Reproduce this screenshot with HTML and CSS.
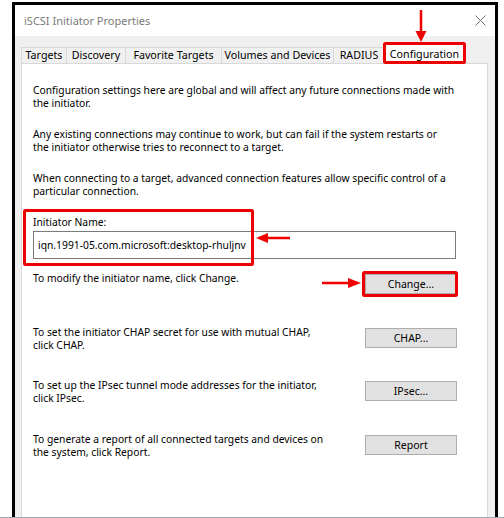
FILE: index.html
```html
<!DOCTYPE html>
<html lang="en">
  <head>
    <meta charset="UTF-8" />
    <title>iSCSI Initiator Properties</title>
    <link rel="stylesheet" href="styles.css">
  </head>
  <body>
    <div class="screen">
      <div class="window">
        <!-- Title bar -->
        <div class="titlebar">
          <span class="title">iSCSI Initiator Properties</span>
          <svg class="close" width="11" height="11" viewBox="0 0 11 11">
            <path d="M0.5 0.5 L10.5 10.5 M10.5 0.5 L0.5 10.5" stroke="#707070" stroke-width="1" fill="none" />
          </svg>
        </div>

        <div class="dialog">
          <!-- Tabs -->
          <div class="tabs">
            <div class="tab tab-targets">Targets</div>
            <div class="tab tab-discovery">Discovery</div>
            <div class="tab tab-favorites">Favorite Targets</div>
            <div class="tab tab-volumes">Volumes and Devices</div>
            <div class="tab tab-radius">RADIUS</div>
            <div class="tab tab-config active">Configuration</div>
          </div>

          <!-- Configuration panel -->
          <div class="panel">
            <p>Configuration settings here are global and will affect any future connections made with the initiator.</p>
            <p>Any existing connections may continue to work, but can fail if the system restarts or<br>the initiator otherwise tries to reconnect to a target.</p>
            <p>When connecting to a target, advanced connection features allow specific control of a particular connection.</p>

            <div class="name-group">
              <label for="initiator-name">Initiator Name:</label>
              <input type="text" id="initiator-name" class="name-input" value="iqn.1991-05.com.microsoft:desktop-rhuljnv" readonly />
            </div>

            <div class="actions">
              <div class="action-row">
                <p>To modify the initiator name, click Change.</p>
                <button type="button" class="win-btn">Change...</button>
              </div>
              <div class="action-row">
                <p>To set the initiator CHAP secret for use with mutual CHAP, click CHAP.</p>
                <button type="button" class="win-btn">CHAP...</button>
              </div>
              <div class="action-row">
                <p>To set up the IPsec tunnel mode addresses for the initiator, click IPsec.</p>
                <button type="button" class="win-btn">IPsec...</button>
              </div>
              <div class="action-row">
                <p>To generate a report of all connected targets and devices on the system, click Report.</p>
                <button type="button" class="win-btn">Report</button>
              </div>
            </div>
          </div>
        </div>
      </div>

      <!-- Red annotations -->
      <svg class="marks" width="504" height="518" viewBox="0 0 504 518">
        <g fill="none" stroke="#ee0000" stroke-width="3">
          <rect x="384.5" y="43.5" width="80" height="19" rx="1" />
          <rect x="24.5" y="210.5" width="228" height="54" rx="1" />
          <rect x="363.5" y="272.5" width="93" height="23" rx="1" />
        </g>
        <g stroke="#ee0000" stroke-width="2.5" fill="#ee0000">
          <line x1="421" y1="10" x2="421" y2="33" />
          <polygon points="415.5,31 426.5,31 421,42" stroke="none" />
          <line x1="290" y1="238" x2="266" y2="238" />
          <polygon points="268,233 268,243 256,238" stroke="none" />
          <line x1="322" y1="283" x2="350" y2="283" />
          <polygon points="348,278 348,288 361,283" stroke="none" />
        </g>
      </svg>

      <div class="bottom-line"></div>
    </div>
  </body>
</html>
```

FILE: styles.css
```css
/* General Styles */
body {
  margin: 0;
  padding: 0;
  background: #fff;
  font-family: "Noto Sans", sans-serif;
  color: #000;
}

.screen {
  position: relative;
  width: 504px;
  height: 518px;
  overflow: hidden;
  background: #fff;
}

.window {
  box-sizing: border-box;
  width: 486px;
  height: 530px;
  margin: 2px 0 0 12px;
  border: 3px solid #000;
  border-bottom: none;
  display: flex;
  flex-direction: column;
}

/* Title bar */
.titlebar {
  flex-shrink: 0;
  height: 31px;
  background: #fff;
  display: flex;
  align-items: center;
  justify-content: space-between;
  padding: 0 9px 0 9px;
}

.title {
  font-size: 11px;
  color: #7a7a7a;
}

/* Dialog body */
.dialog {
  flex: 1;
  min-height: 0;
  background: #f0f0f0;
  padding: 11px 7px 0 6px;
}

.tabs {
  display: flex;
  height: 16px;
  align-items: flex-end;
}

.tab {
  box-sizing: border-box;
  flex: none;
  height: 16px;
  border: 1px solid #d9d9d9;
  border-bottom: none;
  margin-right: -1px;
  font-size: 10.7px;
  line-height: 15px;
  text-align: center;
  color: #000;
  background: #f0f0f0;
}

.tab-targets { width: 46px; }
.tab-discovery { width: 60px; }
.tab-favorites { width: 97px; }
.tab-volumes { width: 113px; }
.tab-radius { width: 52px; }
.tab-config { width: 79px; }

.tab.active {
  height: 20px;
  margin: 0 -2px 0 1px;
  background: #fff;
  line-height: 18px;
  position: relative;
  top: 1px;
}

.panel {
  box-sizing: border-box;
  height: 470px;
  background: #fff;
  border: 1px solid #d9d9d9;
  padding: 20px 30px 0 11px;
}

.panel p {
  margin: 0 0 18px;
  font-size: 10.3px;
  line-height: 13px;
}

/* Initiator name */
.name-group {
  display: flex;
  flex-direction: column;
  gap: 2px;
}

.name-group label {
  font-size: 10.3px;
  line-height: 13px;
}

.name-input {
  box-sizing: border-box;
  width: 423px;
  height: 28px;
  border: 1px solid #7a7a7a;
  padding: 0 4px;
  font-family: "Noto Sans", sans-serif;
  font-size: 10.3px;
  color: #000;
  background: #fff;
}

.name-input:focus {
  outline: none;
}

/* Action rows */
.actions {
  margin-top: 13px;
  display: grid;
  grid-auto-rows: 53.5px;
}

.action-row {
  display: flex;
  justify-content: space-between;
  align-items: flex-start;
}

.action-row p {
  width: 294px;
  margin: 0;
}

.win-btn {
  box-sizing: border-box;
  width: 92px;
  height: 20px;
  margin-top: 2px;
  background: #e1e1e1;
  border: 1px solid #adadad;
  font-family: "Noto Sans", sans-serif;
  font-size: 10.5px;
  color: #000;
  padding: 0;
}

/* Annotations */
.marks {
  position: absolute;
  top: 0;
  left: 0;
  pointer-events: none;
}

.bottom-line {
  position: absolute;
  left: 0;
  bottom: 0;
  width: 100%;
  height: 1px;
  background: #a3a7b1;
}
```
